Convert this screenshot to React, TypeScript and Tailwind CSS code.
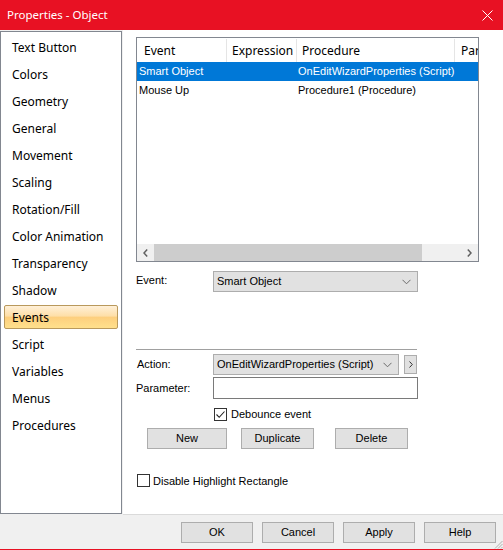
import React from 'react';

const navItems = [
  'Text Button',
  'Colors',
  'Geometry',
  'General',
  'Movement',
  'Scaling',
  'Rotation/Fill',
  'Color Animation',
  'Transparency',
  'Shadow',
  'Events',
  'Script',
  'Variables',
  'Menus',
  'Procedures',
];

const ui = { fontFamily: '"Noto Sans", "Liberation Sans", sans-serif' };
const ms = { fontFamily: '"Liberation Sans", Arial, sans-serif' };

function Chevron() {
  return (
    <svg width="9" height="6" viewBox="0 0 9 6" className="shrink-0">
      <path d="M0.5 0.8 L4.5 4.8 L8.5 0.8" fill="none" stroke="#6b6b6b" strokeWidth="1" />
    </svg>
  );
}

function Combo({ value, w }: { value: string; w: string }) {
  return (
    <div
      className={`${w} h-[21px] flex items-center justify-between bg-[#e1e1e1] border border-[#adadad] pl-[3px] pr-[6px] text-[11px] text-black`}
      style={ms}
    >
      <span>{value}</span>
      <Chevron />
    </div>
  );
}

function Btn({ label, w }: { label: string; w: string }) {
  return (
    <div
      className={`${w} h-[21px] flex items-center justify-center bg-[#e1e1e1] border border-[#adadad] text-[11px] text-black`}
      style={ms}
    >
      {label}
    </div>
  );
}

function CheckBox({ checked }: { checked?: boolean }) {
  return (
    <div className="w-[13px] h-[13px] border border-[#333] bg-white flex items-center justify-center shrink-0">
      {checked && (
        <svg width="11" height="11" viewBox="0 0 11 11">
          <path d="M1.5 5.5 L4.2 8.3 L9.5 2.5" fill="none" stroke="#222" strokeWidth="1.1" />
        </svg>
      )}
    </div>
  );
}

function ListView() {
  return (
    <div className="w-[343px] h-[225px] border border-[#828790] flex flex-col bg-white overflow-hidden">
      <div className="h-[24px] pt-px grid grid-cols-[90px_70px_158px_1fr] text-[12px] text-black" style={ui}>
        <div className="border-r border-[#e5e5e5] pl-[7px] flex items-center">Event</div>
        <div className="border-r border-[#e5e5e5] pl-[5px] flex items-center">Expression</div>
        <div className="border-r border-[#e5e5e5] pl-[5px] flex items-center">Procedure</div>
        <div className="pl-[6px] flex items-center whitespace-nowrap overflow-hidden">Parameter</div>
      </div>
      <div className="flex-1 text-[11px]" style={ms}>
        <div className="h-[19px] grid grid-cols-[90px_70px_158px_1fr] bg-[#0078d7] text-white items-center">
          <div className="pl-[2px] whitespace-nowrap">Smart Object</div>
          <div />
          <div className="pl-[1px] whitespace-nowrap">OnEditWizardProperties (Script)</div>
          <div />
        </div>
        <div className="h-[19px] grid grid-cols-[90px_70px_158px_1fr] text-black items-center">
          <div className="pl-[2px] whitespace-nowrap">Mouse Up</div>
          <div />
          <div className="pl-[1px] whitespace-nowrap">Procedure1 (Procedure)</div>
          <div />
        </div>
      </div>
      <div className="h-[17px] flex bg-[#f0f0f0]">
        <div className="w-[17px] flex items-center justify-center">
          <svg width="5" height="8" viewBox="0 0 5 8">
            <path d="M4.2 0.6 L1 4 L4.2 7.4" fill="none" stroke="#606060" strokeWidth="1.5" />
          </svg>
        </div>
        <div className="w-[268px] bg-[#cdcdcd]" />
        <div className="flex-1" />
        <div className="w-[17px] flex items-center justify-center">
          <svg width="5" height="8" viewBox="0 0 5 8">
            <path d="M0.8 0.6 L4 4 L0.8 7.4" fill="none" stroke="#606060" strokeWidth="1.5" />
          </svg>
        </div>
      </div>
    </div>
  );
}

export default function App() {
  return (
    <div className="w-[503px] h-[550px] bg-[#f0f0f0] flex flex-col overflow-hidden relative">
      {/* title bar */}
      <div className="h-[30px] bg-[#e81123] flex items-center justify-between pl-[7px] pr-[10px] shrink-0">
        <span className="text-[11.5px] text-white" style={ui}>
          Properties - Object
        </span>
        <svg width="11" height="11" viewBox="0 0 11 11">
          <path d="M0.5 0.5 L10.5 10.5 M10.5 0.5 L0.5 10.5" stroke="white" strokeWidth="1" />
        </svg>
      </div>

      <div className="flex h-[485px] shrink-0">
        {/* nav list */}
        <div className="mt-px w-[122px] h-[483px] border border-[#828790] bg-white pt-[2px] shrink-0">
          {navItems.map((item) => (
            <div key={item} className="h-[27px] pt-px">
              {item === 'Events' ? (
                <div
                  className="mx-[3px] h-[24px] pt-[2px] border border-[#b9995c] rounded-[2px] pl-[7px] flex items-center text-[12px] text-black bg-[linear-gradient(to_bottom,#fff0d8_0%,#fedfa8_45%,#fdcf7e_52%,#ffe08c_100%)]"
                  style={ui}
                >
                  {item}
                </div>
              ) : (
                <div className="mx-[3px] h-[24px] pt-[2px] pl-[8px] flex items-center text-[12px] text-black" style={ui}>
                  {item}
                </div>
              )}
            </div>
          ))}
        </div>

        {/* page */}
        <div className="ml-px flex-1 bg-white border-b border-[#dadada] pl-[13px] pt-[7px] flex flex-col text-[11px] text-black" style={ms}>
          <ListView />

          <div className="mt-[9px] flex items-center">
            <span className="w-[77px] -mt-[2px]">Event:</span>
            <Combo value="Smart Object" w="w-[205px]" />
          </div>

          <div className="mt-[57px] w-[281px] border-t border-[#a0a0a0]" />

          <div className="mt-[4px] flex items-center">
            <span className="w-[77px] pl-px">Action:</span>
            <Combo value="OnEditWizardProperties (Script)" w="w-[186px]" />
            <div className="ml-[5px] w-[13px] h-[19px] bg-[#e1e1e1] border border-[#adadad] flex items-center justify-center">
              <svg width="4" height="7" viewBox="0 0 4 7">
                <path d="M0.5 0.5 L3.3 3.5 L0.5 6.5" fill="none" stroke="#333" strokeWidth="1" />
              </svg>
            </div>
          </div>

          <div className="mt-[2px] flex items-center">
            <span className="w-[77px]">Parameter:</span>
            <div className="w-[205px] h-[22px] bg-white border border-[#7a7a7a]" />
          </div>

          <div className="mt-[7px] ml-[78px] flex items-center gap-[4px]">
            <CheckBox checked />
            <span>Debounce event</span>
          </div>

          <div className="mt-[5px] flex">
            <div className="ml-[11px]">
              <Btn label="New" w="w-[80px]" />
            </div>
            <div className="ml-[14px]">
              <Btn label="Duplicate" w="w-[73px]" />
            </div>
            <div className="ml-[21px]">
              <Btn label="Delete" w="w-[73px]" />
            </div>
          </div>

          <div className="mt-[24px] ml-px flex items-center gap-[3px]">
            <CheckBox />
            <span>Disable Highlight Rectangle</span>
          </div>
        </div>
      </div>

      {/* footer */}
      <div className="flex-1 flex justify-end items-start gap-[9px] pt-[7px] pr-[7px] border-b border-[#e81123]">
        <Btn label="OK" w="w-[72px]" />
        <Btn label="Cancel" w="w-[72px]" />
        <Btn label="Apply" w="w-[72px]" />
        <Btn label="Help" w="w-[72px]" />
      </div>

      {/* resize grip */}
      <svg width="9" height="9" viewBox="0 0 9 9" className="absolute right-0 bottom-[1px]">
        <path d="M8.5 1 L1 8.5 M8.5 4 L4 8.5 M8.5 7 L7 8.5" stroke="#b0b0b0" strokeWidth="1" />
      </svg>
    </div>
  );
}
